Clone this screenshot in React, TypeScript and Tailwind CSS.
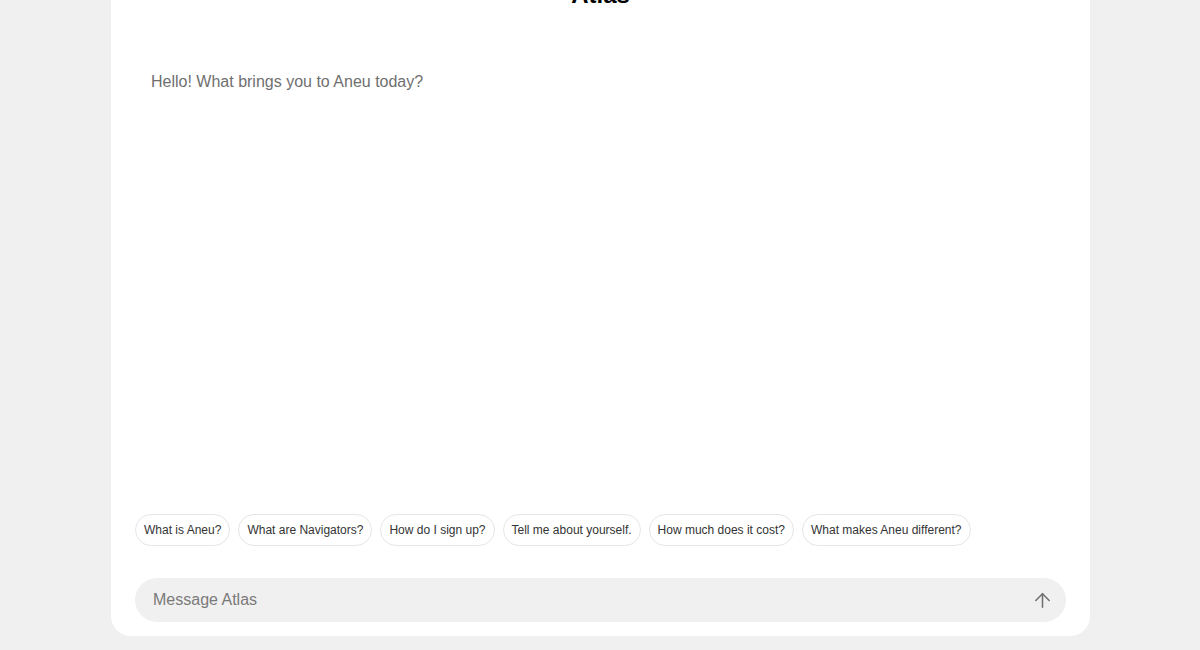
import React, { useState } from 'react';
import { ArrowUp } from 'lucide-react';

const suggestions = [
  'What is Aneu?',
  'What are Navigators?',
  'How do I sign up?',
  'Tell me about yourself.',
  'How much does it cost?',
  'What makes Aneu different?',
];

const App = () => {
  const [message, setMessage] = useState('');

  return (
    <div className="h-[650px] overflow-hidden bg-[#f0f0f0] flex flex-col pb-[14px] font-['Liberation_Sans',Arial,sans-serif]">
      {/* Chat card */}
      <div className="-mt-[50px] flex-1 w-[979px] ml-[111px] bg-white rounded-[20px] flex flex-col pt-[29px] pb-[14px]">
        <h1 className="h-8 leading-8 text-2xl font-bold text-black text-center">Atlas</h1>

        {/* Messages */}
        <div className="flex-1 mt-[59px] px-10">
          <p className="text-base leading-6 text-[#6f6f6f]">Hello! What brings you to Aneu today?</p>
        </div>

        {/* Suggestions */}
        <div className="flex flex-wrap gap-2 px-6">
          {suggestions.map((s, idx) => (
            <button
              key={idx}
              onClick={() => setMessage(s)}
              className="h-8 px-2 rounded-full border border-[#e6e6e6] bg-white text-xs text-[#333] hover:bg-gray-50"
            >
              {s}
            </button>
          ))}
        </div>

        {/* Input */}
        <div className="mx-6 mt-8 h-11 rounded-full bg-[#f0f0f0] flex items-center pl-[18px] pr-2">
          <input
            value={message}
            onChange={(e) => setMessage(e.target.value)}
            placeholder="Message Atlas"
            className="flex-1 bg-transparent outline-none text-base text-[#333] placeholder:text-[#7a7a7a]"
          />
          <button className="w-8 h-8 flex items-center justify-center text-[#6f6f6f]">
            <ArrowUp size={23} strokeWidth={1.6} />
          </button>
        </div>
      </div>
    </div>
  );
};

export default App;
